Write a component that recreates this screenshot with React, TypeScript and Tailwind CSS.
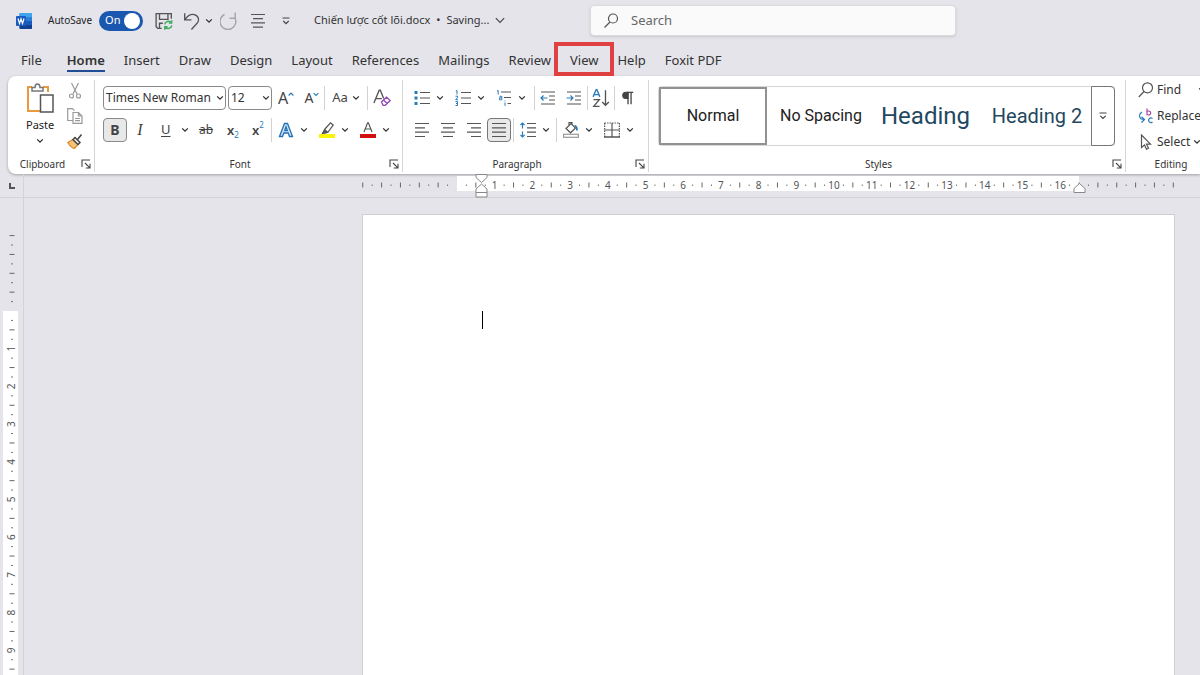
import type { ReactNode } from "react"

const CM = 37.7

const tabs = [
  "File",
  "Home",
  "Insert",
  "Draw",
  "Design",
  "Layout",
  "References",
  "Mailings",
  "Review",
  "View",
  "Help",
  "Foxit PDF",
]

function Chevron({ className = "" }: { className?: string }) {
  return (
    <svg viewBox="0 0 8 6" className={`h-[6px] w-[8px] shrink-0 ${className}`} fill="none" stroke="#333" strokeWidth="1.3">
      <path d="M1.2 1.4 4 4.2 6.8 1.4" />
    </svg>
  )
}

function Icon({ children, size = "h-4 w-4" }: { children: ReactNode; size?: string }) {
  return (
    <svg viewBox="0 0 16 16" className={`shrink-0 ${size}`} fill="none" stroke="#555" strokeWidth="1.2">
      {children}
    </svg>
  )
}

function IconButton({ label, width = "w-[26px]", children }: { label: string; width?: string; children: ReactNode }) {
  return (
    <button aria-label={label} className={`flex h-6 shrink-0 items-center justify-center ${width}`}>
      {children}
    </button>
  )
}

function SplitButton({ label, children }: { label: string; children: ReactNode }) {
  return (
    <button aria-label={label} className="flex h-6 shrink-0 items-center gap-1.5">
      {children}
      <Chevron />
    </button>
  )
}

function Separator({ className = "" }: { className?: string }) {
  return <div className={`h-6 w-px shrink-0 bg-[#d2d2d2] ${className}`} />
}

function Launcher({ label }: { label: string }) {
  return (
    <button aria-label={label}>
      <svg viewBox="0 0 10 10" className="h-[10px] w-[10px]" fill="none" stroke="#444" strokeWidth="1.1">
        <path d="M1 8V1h8M4 4l4.6 4.6M9 4.8V9H4.8" />
      </svg>
    </button>
  )
}

function Group({ name, className, launcher = true, children }: { name: string; className: string; launcher?: boolean; children: ReactNode }) {
  return (
    <section aria-label={name} className={`flex shrink-0 flex-col border-r border-[#d6d6d6] ${className}`}>
      <div className="h-[76px]">{children}</div>
      <div className="flex h-4 items-center pr-[3px]">
        <span className="flex-1 pr-1 text-center text-[10px] leading-4 text-[#333]">{name}</span>
        {launcher && <Launcher label={`${name} settings`} />}
      </div>
    </section>
  )
}

function TitleBar() {
  return (
    <header className="flex h-[41px] shrink-0 items-center pl-4">
      <svg viewBox="0 0 16 16" className="h-4 w-4 shrink-0">
        <rect x="3.5" y="0" width="12.5" height="16" rx="1" fill="#2b7cd3" />
        <rect x="3.5" y="0" width="12.5" height="4.2" rx="1" fill="#41a5ee" />
        <rect x="3.5" y="8" width="12.5" height="4" fill="#185abd" />
        <path d="M3.5 12H16v3a1 1 0 0 1-1 1H4.5a1 1 0 0 1-1-1z" fill="#103f91" />
        <rect x="0" y="3" width="10" height="10" rx="1" fill="#185abd" />
        <path d="m2 5.500 1.500 5L5 6l1.500 4.500L8 5.500" fill="none" stroke="#fff" strokeWidth="1.2" />
      </svg>
      <label className="ml-4 flex items-center gap-[7px]">
        <span className="text-[10px]">AutoSave</span>
        <input type="checkbox" defaultChecked className="peer sr-only" />
        <span className="flex h-5 w-11 items-center justify-between rounded-full bg-[#1a58b0] pr-[3px] pl-1.5 text-[11px] text-white">
          On
          <span className="h-4 w-4 rounded-full bg-white" />
        </span>
      </label>
      <div className="ml-3 flex items-center">
        <button aria-label="Save">
          <Icon size="h-[18px] w-[18px]">
            <path d="M6 14.500H2.500l-1.500-1.500V1.500h13.500V6M4 1.500v5h7.500v-5M4 14v-4h3" />
            <path d="M8.500 11a3.500 3.500 0 0 1 6-1.500M14.800 7.300v2.500h-2.500M15 12a3.500 3.500 0 0 1-6 1.500M8.700 15.700v-2.500h2.500" stroke="#3fae5c" strokeWidth="1.3" />
          </Icon>
        </button>
        <button aria-label="Undo" className="ml-2.5 flex items-center gap-1">
          <Icon size="h-[18px] w-[18px]">
            <path d="M1.500 1v6h6M1.800 6.700C4 3.500 7 1.500 10 2.300c4 1 5 5 2.500 7.700L7.500 15.500" />
          </Icon>
          <Chevron />
        </button>
        <button aria-label="Redo" className="ml-[7px]">
          <Icon size="h-[18px] w-[18px]">
            <path d="M13.500.5v5H8.500M13.200 5.200A7 7 0 1 1 4 2.200" stroke="#a5a5aa" strokeWidth="1.3" />
          </Icon>
        </button>
        <button aria-label="Center" className="ml-3">
          <Icon>
            <path d="M1 1.500h14M3 5.700h10M1 9.900h14M3 14.100h10" />
          </Icon>
        </button>
        <button aria-label="Customize Quick Access Toolbar" className="ml-4">
          <svg viewBox="0 0 8 8" className="h-2 w-2" fill="none" stroke="#444" strokeWidth="1.2">
            <path d="M.5 1h7M1.300 4 4 6.700 6.700 4" />
          </svg>
        </button>
      </div>
      <button className="ml-6 flex items-center gap-1.5 text-[11px] whitespace-nowrap text-[#333]">
        Chiến lược cốt lõi.docx <span>•</span> Saving...
        <svg viewBox="0 0 10 7" className="h-[7px] w-[10px]" fill="none" stroke="#444" strokeWidth="1.1">
          <path d="m.8 1.200 4.200 4.200 4.200-4.200" />
        </svg>
      </button>
      <label className="ml-auto mr-[244px] flex h-[31px] w-[366px] shrink-0 items-center gap-3 rounded border border-[#dcdce0] bg-[#fafafb] pl-3 shadow-sm">
        <Icon>
          <circle cx="10" cy="5.500" r="4.500" />
          <path d="M7 9 1.500 14.500" />
        </Icon>
        <input type="text" aria-label="Search" placeholder="Search" className="w-full bg-transparent text-[13px] outline-none placeholder:text-[#666]" />
      </label>
    </header>
  )
}

function TabBar() {
  return (
    <nav className="flex h-[35px] shrink-0 items-center gap-[19px] pl-[21px] text-[13px] whitespace-nowrap text-[#333]">
      {tabs.map((tab) => (
        <a
          key={tab}
          href={`#${tab}`}
          className={`relative pt-1 pb-0.5 leading-5 ${tab === "Home" ? "ml-1.5 font-semibold" : ""} ${tab === "View" ? "z-10" : ""}`}
        >
          {tab}
          {tab === "Home" && <span className="absolute inset-x-0 bottom-0 h-0.5 bg-[#1f4e96]" />}
          {tab === "View" && <span className="absolute -inset-x-4 -top-1 -bottom-1 border-4 border-[#df4143]" />}
        </a>
      ))}
    </nav>
  )
}

function ClipboardGroup() {
  return (
    <Group name="Clipboard" className="w-[87px]">
      <div className="flex justify-between pt-[3px] pr-[11px] pl-[18px]">
        <button className="flex flex-col items-center text-[11px] leading-4">
          <svg viewBox="0 0 28 32" className="h-8 w-7" fill="none" strokeWidth="1.5">
            <path d="M6 4H2v24H14M17 4h5v5" stroke="#e89a3c" strokeWidth="2" />
            <path d="M6 8V4.500h3C9 2 10 1 11.500 1S14 2 14 4.500h3V8z" fill="#fff" stroke="#777" />
            <rect x="14.500" y="12" width="12.500" height="17" fill="#fff" stroke="#555" />
          </svg>
          <span className="mt-0.5">Paste</span>
          <Chevron className="mt-[5px]" />
        </button>
        <div className="flex flex-col gap-[9px]">
          <button aria-label="Cut">
            <Icon>
              <path d="M4.500 0l5.500 11M11.500 0 6 11" stroke="#999" />
              <circle cx="4.500" cy="13" r="2" stroke="#999" />
              <circle cx="11.500" cy="13" r="2" stroke="#999" />
            </Icon>
          </button>
          <button aria-label="Copy">
            <Icon>
              <path d="M6 12.500H.7V.7h4.800l2 2M6 4.500h5.500l3.500 3.500v7.300H6zM11.500 4.500V8H15M8 10.500h5M8 12.700h5" stroke="#999" />
            </Icon>
          </button>
          <button aria-label="Format Painter">
            <Icon>
              <path d="M.8 9.500 6 6.500l5 5-3.500 4C5 15 3 13 .8 9.500z" fill="#f6c27a" stroke="#dd8624" />
              <path d="m6 6.500 2-2 5 5-2 2zM10.500 6.500l4-5" stroke="#444" strokeWidth="1.5" fill="#fff" />
            </Icon>
          </button>
        </div>
      </div>
    </Group>
  )
}

function FontGroup() {
  return (
    <Group name="Font" className="w-[308px]">
      <div className="flex items-center pt-1.5 pl-2">
        <div className="relative mr-0.5 flex">
          <select aria-label="Font" className="h-6 w-[123px] appearance-none rounded border border-[#8a8a8a] bg-white pl-0.5 text-[12px] leading-4 text-[#333]">
            <option>Times New Roman</option>
          </select>
          <Chevron className="pointer-events-none absolute top-[9px] right-0.5" />
        </div>
        <div className="relative flex">
          <select aria-label="Font size" className="h-6 w-[44px] appearance-none rounded border border-[#8a8a8a] bg-white pl-0.5 text-[12px] leading-4 text-[#333]">
            <option>12</option>
          </select>
          <Chevron className="pointer-events-none absolute top-[9px] right-0.5" />
        </div>
        <IconButton label="Increase Font Size" width="w-7">
          <span className="text-[16px] leading-4 text-[#444]">A</span>
          <svg viewBox="0 0 6 12" className="h-3 w-1.5" fill="none" stroke="#2b7cb8" strokeWidth="1.2">
            <path d="m.6 3.500 2.400-2.400 2.400 2.400" />
          </svg>
        </IconButton>
        <IconButton label="Decrease Font Size" width="w-6">
          <span className="text-[14px] leading-4 text-[#444]">A</span>
          <svg viewBox="0 0 6 12" className="h-3 w-1.5" fill="none" stroke="#2b7cb8" strokeWidth="1.2">
            <path d="m.6 1.100 2.400 2.400 2.400-2.400" />
          </svg>
        </IconButton>
        <Separator />
        <button aria-label="Change Case" className="flex h-6 w-[42px] items-center justify-center gap-1 text-[13px] text-[#444]">
          Aa
          <Chevron />
        </button>
        <Separator />
        <IconButton label="Clear All Formatting" width="w-7">
          <Icon size="h-[18px] w-[18px]">
            <path d="M.8 12.500 5.500 1h1l3 7.500M2.800 8.500h5" />
            <path d="m7.500 11.500 4.500-4.200 3.300 3-4.500 4.200H9zM9.300 9.800l3.200 3" stroke="#9548b0" />
          </Icon>
        </IconButton>
      </div>
      <div className="flex items-center pt-2 pl-2 text-[#444]">
        <button aria-label="Bold" className="h-6 w-6 shrink-0 rounded border border-[#8a8a8a] bg-[#e8e8e8] text-[14px] leading-5 font-bold">B</button>
        <IconButton label="Italic">
          <span className="font-['Liberation_Serif',serif] text-[16px] leading-4 italic">I</span>
        </IconButton>
        <button aria-label="Underline" className="flex h-6 w-[38px] items-center justify-between pr-0.5 pl-2 text-[13px]">
          <span className="underline underline-offset-2">U</span>
          <Chevron />
        </button>
        <IconButton label="Strikethrough" width="w-[30px]">
          <span className="text-[12px] line-through">ab</span>
        </IconButton>
        <IconButton label="Subscript" width="w-6">
          <span className="text-[13px] leading-4 font-semibold">x</span>
          <span className="self-end pb-0.5 text-[8px] leading-[10px] text-[#2b7cb8]">2</span>
        </IconButton>
        <IconButton label="Superscript">
          <span className="text-[13px] leading-4 font-semibold">x</span>
          <span className="self-start pt-0.5 text-[8px] leading-[10px] text-[#2b7cb8]">2</span>
        </IconButton>
        <Separator className="mr-1.5" />
        <div className="flex gap-[11px]">
          <SplitButton label="Text Effects">
            <Icon>
              <path d="M1.500 14.500 6.500 1.500h3l5 13h-3l-1.300-3.500H5.800L4.500 14.500zM6.700 8.500h2.600L8 4.800z" fill="#cfe5f7" stroke="#2470b8" strokeWidth="1.3" />
            </Icon>
          </SplitButton>
          <SplitButton label="Text Highlight Color">
            <Icon>
              <path d="M0 14h16" stroke="#fbf30a" strokeWidth="4" />
              <path d="M5.500 7.500 11.500.8l2.700 2.400L9 10l-2 .8-3.500.7z" />
              <path d="m4 11 2-3 2.500 2.200z" fill="#555" />
            </Icon>
          </SplitButton>
          <SplitButton label="Font Color">
            <Icon>
              <path d="M0 14h16" stroke="#d40f0f" strokeWidth="4" />
              <path d="M4 10 7.600.8h.8L12 10M5.200 7h5.600" />
            </Icon>
          </SplitButton>
        </div>
      </div>
    </Group>
  )
}

function ParagraphGroup() {
  return (
    <Group name="Paragraph" className="w-[246px]">
      <div className="flex items-center pt-1.5 pl-[11px]">
        <div className="flex gap-[11px]">
          <SplitButton label="Bullets">
            <Icon>
              <path d="M6 2.500h10M6 8h10M6 13.500h10" />
              <path d="M.5 2.500h3M.5 8h3M.5 13.500h3" stroke="#2b7cb8" strokeWidth="3" />
            </Icon>
          </SplitButton>
          <SplitButton label="Numbering">
            <Icon>
              <path d="M6 2.500h10M6 8h10M6 13.500h10" />
              <path d="M.8 1 2 .5v4M.5 6.200h2v1.500l-1.800 2h2.200M.5 11.500h2v4h-2M1 13.500h1.500" stroke="#2b7cb8" strokeWidth="1" />
            </Icon>
          </SplitButton>
          <SplitButton label="Multilevel List">
            <Icon>
              <path d="M5 2h10M8 7.500h7M11.500 13.500H15" />
              <path d="M1 1 2.200.5v4M3.500 6.300h2.300v3.500H3.500v-2h2.300M9 10.500v.8M9 12.500v3.300" stroke="#2b7cb8" strokeWidth="1" />
            </Icon>
          </SplitButton>
        </div>
        <Separator className="ml-2" />
        <IconButton label="Decrease Indent">
          <Icon>
            <path d="M1 2h14M9 6h6M9 10h6M1 14h14" />
            <path d="M7.500 8H1M3.500 5.500 1 8l2.500 2.500" stroke="#2b7cb8" />
          </Icon>
        </IconButton>
        <IconButton label="Increase Indent">
          <Icon>
            <path d="M1 2h14M9 6h6M9 10h6M1 14h14" />
            <path d="M.5 8H7M4.500 5.500 7 8l-2.500 2.500" stroke="#2b7cb8" />
          </Icon>
        </IconButton>
        <Separator />
        <IconButton label="Sort">
          <Icon size="h-[18px] w-[18px]">
            <path d="M1 7 3.700.5h.6L7 7M2 5h4" stroke="#2b7cb8" />
            <path d="M1.300 9.500H6.500l-5 6h5.200" />
            <path d="M12 1v13.500M9 11.500l3 3 3-3" />
          </Icon>
        </IconButton>
        <Separator />
        <IconButton label="Show paragraph marks">
          <Icon size="h-3.5 w-3.5">
            <path d="M8 1.500H5.500a3.500 3.500 0 0 0 0 7H8z" fill="#444" stroke="#444" />
            <path d="M8 1.500V15M11.500 1.500V15M7 1.500h7" stroke="#444" strokeWidth="1.5" />
          </Icon>
        </IconButton>
      </div>
      <div className="flex items-center pt-2 pl-1.5">
        <IconButton label="Align Left">
          <Icon>
            <path d="M1 1.500h14M1 5.800h10M1 10.200h14M1 14.500h10" />
          </Icon>
        </IconButton>
        <IconButton label="Center text">
          <Icon>
            <path d="M1 1.500h14M3 5.800h10M1 10.200h14M3 14.500h10" />
          </Icon>
        </IconButton>
        <IconButton label="Align Right">
          <Icon>
            <path d="M1 1.500h14M5 5.800h10M1 10.200h14M5 14.500h10" />
          </Icon>
        </IconButton>
        <button aria-label="Justify" className="flex h-6 w-6 items-center justify-center rounded border border-[#777] bg-[#e8e8e8]">
          <Icon>
            <path d="M1 1.500h14M1 5.800h14M1 10.200h14M1 14.500h14" />
          </Icon>
        </button>
        <Separator className="mx-0.5" />
        <div className="ml-1 flex">
          <SplitButton label="Line Spacing">
            <Icon>
              <path d="M7 1.500h9M7 5.800h9M7 10.200h9M7 14.500h9" />
              <path d="M2.500 1v5.500M.5 3l2-2 2 2M2.500 15V9.500M.5 13l2 2 2-2" stroke="#2b7cb8" />
            </Icon>
          </SplitButton>
        </div>
        <Separator className="mx-1.5" />
        <div className="flex gap-[11px]">
          <SplitButton label="Shading">
            <Icon>
              <rect x=".6" y="12.300" width="14.800" height="3" stroke="#999" />
              <path d="M3 6.500 8 1.500l4.500 4.500-5 4.800zM6 3.500V.5h3v2" />
              <path d="M11.500 3.500c2 .5 2.500 2.500 2.500 5" stroke="#2b7cb8" strokeWidth="1.8" />
            </Icon>
          </SplitButton>
          <SplitButton label="Borders">
            <Icon>
              <path d="M.6 1h15M.6 1v14M15.400 1v14" strokeDasharray="1.500 1" />
              <path d="M8 1v14M.6 8h14.800" />
              <path d="M0 15h16" strokeWidth="1.5" />
            </Icon>
          </SplitButton>
        </div>
      </div>
    </Group>
  )
}

function StylesGroup() {
  return (
    <Group name="Styles" className="w-[477px]">
      <div className="pt-1.5">
        <div className="ml-[9px] flex h-[60px] w-[457px] rounded border border-[#d6d6d6] font-['Roboto',sans-serif] whitespace-nowrap">
          <button className="h-[58px] w-[108px] shrink-0 border-2 border-[#929292] text-[16px] text-[#222]">Normal</button>
          <button className="h-[58px] w-[108px] shrink-0 text-[16px] text-[#222]">No Spacing</button>
          <button className="h-[58px] w-[108px] shrink-0 pl-1.5 text-left text-[#1f4861]">
            <span className="block w-[96px] overflow-hidden text-[24px]">Heading 1</span>
          </button>
          <button className="h-[58px] w-[108px] shrink-0 text-[20px] text-[#1f4861]">Heading 2</button>
          <button aria-label="More styles" className="-my-px -mr-px flex flex-1 items-center justify-center rounded-r border border-[#777]">
            <svg viewBox="0 0 8 8" className="h-2 w-2" fill="none" stroke="#444" strokeWidth="1.2">
              <path d="M.5 1h7M1.300 3.800 4 6.500l2.700-2.700" />
            </svg>
          </button>
        </div>
      </div>
    </Group>
  )
}

function EditingGroup() {
  return (
    <Group name="Editing" className="w-[98px]" launcher={false}>
      <div className="flex flex-col gap-1.5 pl-3 text-[12px] text-[#333]">
        <button className="flex h-5 items-center gap-[3px]">
          <Icon>
            <circle cx="9.500" cy="5.800" r="5" />
            <path d="M6 9.500.8 15" />
          </Icon>
          Find
          <Chevron className="ml-3.5" />
        </button>
        <button className="flex h-5 items-center gap-[3px]">
          <Icon>
            <path d="M9 .5v6.700M9 4a2 2 0 1 1 0 2" stroke="#a548a8" />
            <path d="M14.500 10.500a2.300 2.300 0 1 0 0 3.500M4 4C.5 6 .5 11.500 6 11.500M3.500 8.800 6.500 11.500l-3 3" stroke="#2b7cb8" />
          </Icon>
          Replace
        </button>
        <button className="flex h-5 items-center gap-[3px]">
          <Icon>
            <path d="M3.500 1v12.500L6.500 11l2 4.300 2-1-2-4.100h4z" />
          </Icon>
          Select
          <Chevron />
        </button>
      </div>
    </Group>
  )
}

// quarter-centimetre steps: number or tick on whole and half, dot in between
function scaleMarks(from: number, to: number) {
  const marks: { cm: number; kind: "label" | "tick" | "dot" }[] = []
  for (let q = from * 4; q <= to * 4; q++) {
    if (q === 0) continue
    const cm = q / 4
    if (q % 2 !== 0) marks.push({ cm, kind: "dot" })
    else marks.push({ cm, kind: q % 4 === 0 && q > 0 && cm < 17 ? "label" : "tick" })
  }
  return marks
}

function HorizontalRuler() {
  const zero = 433
  return (
    <svg className="h-6 flex-1 font-['Noto_Sans',sans-serif] text-[10px]" aria-hidden="true">
      <rect x={zero} y="2" width={CM * 16.5} height="15" fill="#fff" />
      {scaleMarks(-2.5, 19).map(({ cm, kind }) => {
        const x = zero + cm * CM
        if (kind === "label") {
          return (
            <text key={cm} x={x} y="15" textAnchor="middle" fill="#555">
              {cm}
            </text>
          )
        }
        return kind === "tick" ? (
          <path key={cm} d={`M${x} 8.500v5`} stroke="#666" />
        ) : (
          <path key={cm} d={`M${x} 10.500v1.500`} stroke="#777" />
        )
      })}
      <g fill="#fff" stroke="#888">
        <path d="M452 .5h11v3l-5.500 5-5.500-5z" />
        <path d="M457.500 10l5.500 5v8h-11v-8zM452 18.500h11" />
        <path d="M1055.500 9.500l5.500 5v4h-11v-4z" />
      </g>
    </svg>
  )
}

function VerticalRuler() {
  const zero = 113
  return (
    <svg className="w-6 shrink-0 border-r border-[#d3d3d9] font-['Noto_Sans',sans-serif] text-[10px]" aria-hidden="true">
      <rect x="3" y={zero} width="15" height="100%" fill="#fff" />
      {scaleMarks(-2, 9.5).map(({ cm, kind }) => {
        const y = zero + cm * CM
        if (kind === "label") {
          return (
            <text key={cm} x="0" y="0" textAnchor="middle" fill="#555" transform={`translate(15 ${y}) rotate(-90)`}>
              {cm}
            </text>
          )
        }
        return kind === "tick" ? (
          <path key={cm} d={`M9.500 ${y}h5`} stroke="#666" />
        ) : (
          <path key={cm} d={`M11 ${y}h2`} stroke="#777" />
        )
      })}
    </svg>
  )
}

export default function App() {
  return (
    <div className="flex h-screen flex-col overflow-hidden bg-[#e4e4ea] font-['Noto_Sans',sans-serif] text-[#222]">
      <TitleBar />
      <TabBar />
      <div className="ml-2 flex h-[98px] shrink-0 overflow-hidden rounded-l-lg bg-white pt-1 pb-0.5 shadow-[0_1px_3px_rgba(0,0,0,0.3)]">
        <ClipboardGroup />
        <FontGroup />
        <ParagraphGroup />
        <StylesGroup />
        <EditingGroup />
      </div>
      <div className="flex h-6 shrink-0 border-b border-[#d3d3d9]">
        <div className="flex w-6 shrink-0 items-center justify-center border-r border-[#d3d3d9]">
          <svg viewBox="0 0 6 6" className="h-1.5 w-1.5" fill="none" stroke="#555" strokeWidth="2">
            <path d="M1 0v5h5" />
          </svg>
        </div>
        <HorizontalRuler />
      </div>
      <div className="flex min-h-0 flex-1">
        <VerticalRuler />
        <main className="flex flex-1 pt-4 pl-[338px]">
          <div role="textbox" aria-label="Document" className="w-[813px] shrink-0 border border-b-0 border-[#cfcfd3] bg-white pt-24 pl-[119px]">
            <div className="h-[18px] w-px bg-black" />
          </div>
        </main>
      </div>
    </div>
  )
}
